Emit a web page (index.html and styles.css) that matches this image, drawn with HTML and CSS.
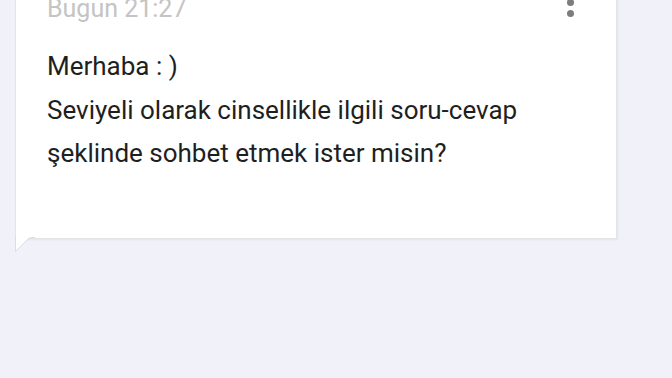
FILE: index.html
```html
<!DOCTYPE html>
<html>
<head>
<meta charset="utf-8">
<link rel="stylesheet" href="styles.css">
</head>
<body>
<div class="thread">
  <div class="bubble">
    <div class="meta">
      <span class="time">Bugun 21:27</span>
      <span class="more"><i></i><i></i><i></i></span>
    </div>
    <div class="body">
      <p>Merhaba : )</p>
      <p>Seviyeli olarak cinsellikle ilgili soru-cevap şeklinde sohbet etmek ister misin?</p>
    </div>
    <svg class="tail" width="20" height="16" viewBox="0 0 20 16"><path d="M0.5 0 V14.5 L13 2 Q14.5 0.5 17 0.5 H20" fill="#fff" stroke="#dcdce2" stroke-width="1"/><path d="M1 0 V13 L13 0 Z" fill="#fff"/></svg>
  </div>
</div>
</body>
</html>
```
FILE: styles.css
```css
html, body { margin: 0; padding: 0; }
body {
  background: #f1f1f9;
  font-family: Roboto, "Noto Sans", sans-serif;
  width: 672px;
  height: 378px;
  overflow: hidden;
}
.thread {
  padding-left: 15px;
}
.bubble {
  position: relative;
  width: 602px;
  margin-top: -40px;
  background: #fff;
  border: 1px solid #e3e3e8;
  border-top: none;
  box-shadow: 1px 1px 2px rgba(0,0,0,0.06);
  padding: 0 0 0 31px;
  box-sizing: border-box;
  height: 279px;
}
.meta {
  display: flex;
  justify-content: space-between;
  align-items: flex-start;
  height: 85px;
  padding-right: 42px;
}
.time {
  font-size: 25px;
  color: #c4c4c4;
  line-height: 25px;
  padding-top: 36px;
}
.more {
  display: flex;
  flex-direction: column;
  gap: 4px;
  padding-top: 28px;
}
.more i {
  display: block;
  width: 7px;
  height: 7px;
  border-radius: 50%;
  background: #7d7d7d;
}
.body {
  font-size: 26px;
  color: #1f1f1f;
  line-height: 43.5px;
  padding-right: 60px;
}
.body p { margin: 0; }
.tail {
  position: absolute;
  left: -1px;
  bottom: -15px;
  display: block;
}
```
